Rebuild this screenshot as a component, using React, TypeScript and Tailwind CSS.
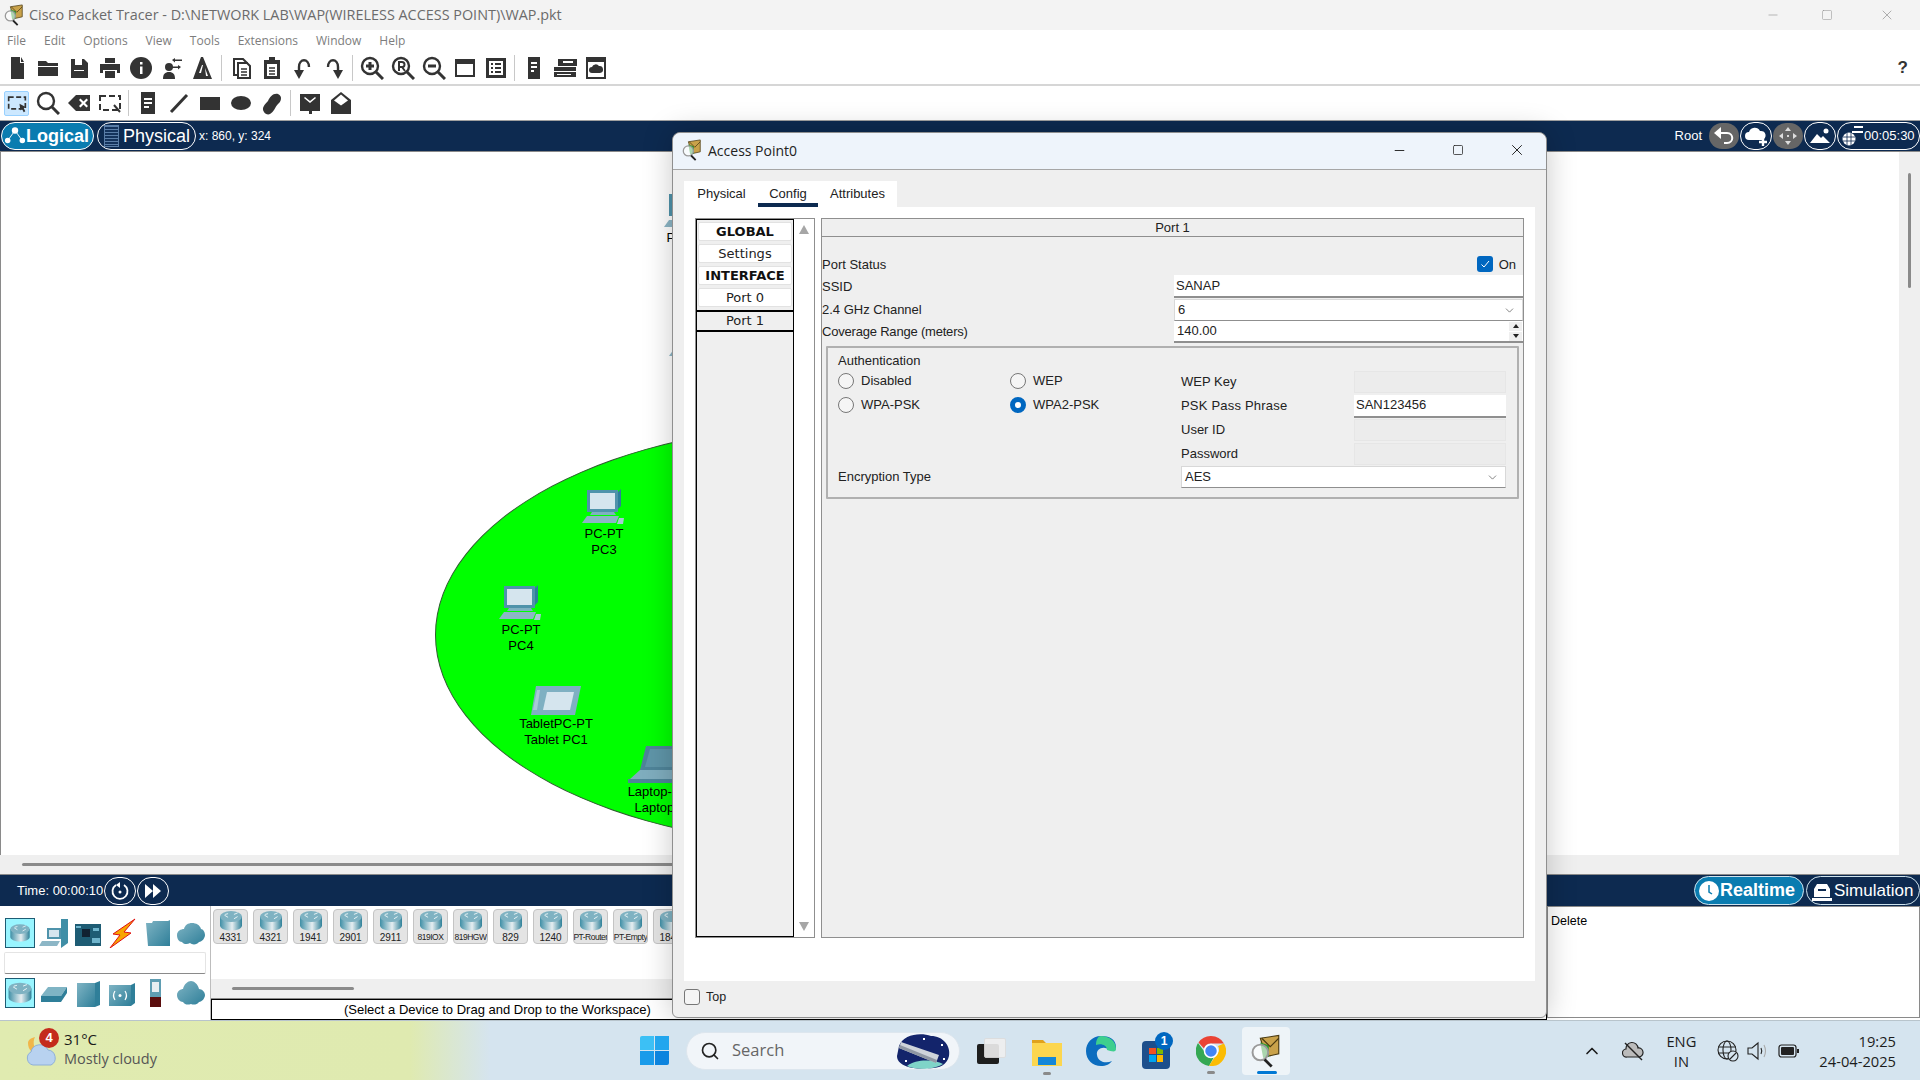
import React from 'react';
import { ChevronDown, ChevronUp, Minus, Search, Square, X } from 'lucide-react';

const D = '#333333';

// toolbar glyphs, all on a 24 box
const glyphs: Record<string, React.ReactNode> = {
  newFile: <path fill={D} d="M6 1h9v6h4v16H6zM16 1l3 5h-3z" />,
  open: <path fill={D} d="M2 5h8l2 2h10v3H2zM2 11h20v9H2z" />,
  save: <path fill={D} fillRule="evenodd" d="M4 3h13l4 4v15H4zM8 3v6h7V3zM7 14v1h10v-1z" />,
  print: <path fill={D} d="M7 2h10v5H7zM2 8h20v9h-3v-3H5v3H2zM7 15h10v7H7z" />,
  info: <><circle cx="12" cy="12" r="11" fill={D} /><path fill="#fff" d="M11 6h2.5v2.5H11zM11 10.5h2.5V18H11z" /></>,
  wizard: <><circle cx="9" cy="11" r="4" fill={D} /><path fill={D} d="M3 23c0-5 2-7 6-7s6 2 6 7zM12 4l3-2v1.5h7v1.5h-7v1.5zM21 11l-3-2v1.5h-6V12h6v1.5z" /></>,
  flask: <path fill={D} fillRule="evenodd" d="M10 1h2l9 22H2zM11 9l-3 8h2l2-8zM14 12l1 8h2z" />,
  copy: <><path fill="#fff" stroke={D} strokeWidth="2" d="M5 3h9l4 4v12H5z" /><path fill="#fff" stroke={D} strokeWidth="2" d="M9 7h9l3 3v12H9z" /><path stroke={D} strokeWidth="1.5" d="M12 13h6M12 16h6M12 19h6" /></>,
  paste: <><path fill={D} d="M4 4h16v19H4z" /><path fill={D} d="M9 1h6v5H9z" /><path fill="#fff" d="M7 8h10v12H7z" /><path stroke={D} strokeWidth="1.5" d="M9 12h6M9 15h6M9 18h6" /></>,
  undo: <><path fill="none" stroke={D} strokeWidth="2.4" d="M18 11C18 2 8 2 8 11v5" /><path fill={D} d="M3 14h10l-5 9z" /></>,
  redo: <><path fill="none" stroke={D} strokeWidth="2.4" d="M6 11C6 2 16 2 16 11v5" /><path fill={D} d="M11 14h10l-5 9z" /></>,
  zoomIn: <><circle cx="10" cy="10" r="8" fill="#fff" stroke={D} strokeWidth="2.4" /><path stroke={D} strokeWidth="3" d="M16 16l7 7M6 10h8M10 6v8" /></>,
  zoomReset: <><circle cx="10" cy="10" r="8" fill="#fff" stroke={D} strokeWidth="2.4" /><path stroke={D} strokeWidth="3" d="M16 16l7 7" /><path fill="none" stroke={D} strokeWidth="2" d="M8 15V6h3a2.5 2.5 0 010 5H8M11 11l3 4" /></>,
  zoomOut: <><circle cx="10" cy="10" r="8" fill="#fff" stroke={D} strokeWidth="2.4" /><path stroke={D} strokeWidth="3" d="M16 16l7 7M6 10h8" /></>,
  win: <path fill={D} fillRule="evenodd" d="M2 3h20v18H2zM4 8v11h16V8z" />,
  list: <path fill={D} fillRule="evenodd" d="M2 2h20v20H2zM5 5v14h14V5zM7 7h2v2H7zM11 7h6v2h-6zM7 11h2v2H7zM11 11h6v2h-6zM7 15h2v2H7zM11 15h6v2h-6z" />,
  server: <path fill={D} fillRule="evenodd" d="M6 1h12v22H6zM9 6v2h6V6zM9 10v2h6v-2zM9 14v2h3v-2z" />,
  rack: <path fill={D} fillRule="evenodd" d="M5 3h19v7H5zM10 5v2h10V5zM1 11h22v4H1zM1 16h22v5H1zM4 18v1h14v-1z" />,
  cloudBox: <><path fill={D} fillRule="evenodd" d="M2 1h20v22H2zM4 6v15h16V6z" /><path fill={D} d="M8 17a3 3 0 010-6 4 4 0 017-1 3.5 3.5 0 011 7z" /></>,
  select: <><path fill="none" stroke={D} strokeWidth="2" strokeDasharray="6 3" d="M2 5h20v14H2z" /><path fill={D} d="M15 13l8 4-3 1 2 4-2 1-2-4-2 2z" /></>,
  inspect: <><circle cx="10" cy="10" r="8" fill="none" stroke={D} strokeWidth="2.4" /><path stroke={D} strokeWidth="3" d="M16 16l7 7" /></>,
  erase: <path fill={D} fillRule="evenodd" d="M9 4h14v16H9L1 12zM12 9l3 3-3 3 1.5 1.5 3-3 3 3L21 15l-3-3 3-3-1.5-1.5-3 3-3-3z" />,
  resize: <><path fill="none" stroke={D} strokeWidth="2" strokeDasharray="6 3" d="M2 5h20v14H2z" /><path stroke={D} strokeWidth="2" d="M16 14l6 7" /></>,
  note: <path fill={D} fillRule="evenodd" d="M5 1h14v22H5zM8 7v2h8V7zM8 11v2h8v-2zM8 15v2h5v-2z" />,
  line: <path stroke={D} strokeWidth="3" d="M4 21L20 4" />,
  rect: <path fill={D} d="M2 6h20v13H2z" />,
  oval: <ellipse cx="12" cy="12" rx="10" ry="7" fill={D} />,
  free: <path fill={D} d="M4 21c-3-4 1-8 4-11 2-4 5-8 10-7 5 2 3 8 0 10-3 3-4 8-8 10-2 1-5 0-6-2z" />,
  mail: <path fill={D} fillRule="evenodd" d="M2 3h20v17h-8v3h-3v-3H2zM6 7l6 5 6-5-1-1-5 4-5-4z" />,
  mailOpen: <><path fill={D} d="M12 1l10 8v14H2V9z" /><path fill="#fff" d="M12 3.5L5 9.5l7 5 7-5z" /></>,
};

const Tool = ({ name, active }: { name: string; active?: boolean }) => (
  <div className="w-[31px] h-full flex items-center justify-center">
    <div className={active ? 'w-[25px] h-[25px] flex items-center justify-center rounded-[2px] bg-[#cce8ff] border border-[#99d1ff]' : 'flex items-center justify-center'}>
      <svg width="24" height="24" viewBox="0 0 24 24" className={active ? 'w-[20px] h-[20px]' : ''}>{glyphs[name]}</svg>
    </div>
  </div>
);

const Sep = () => <div className="w-px h-[26px] bg-[#c8c8c8] mx-[3px]" />;

const PtLogo = ({ size }: { size: number }) => (
  <svg width={size} height={size} viewBox="0 0 24 24">
    <path fill="#c9a24a" stroke="#4a3a10" strokeWidth="0.8" d="M8 3l13-2v13l-9 2z" />
    <path fill="#2f9a35" d="M8 6l6 2v8l-4 1z" />
    <path fill="none" stroke="#4a3a10" strokeWidth="0.8" d="M9 3l6 6 6-6" />
    <circle cx="8" cy="13" r="5.5" fill="#ffffff" fillOpacity="0.6" stroke="#9a9a9a" strokeWidth="1.4" />
    <path stroke="#222" strokeWidth="2" d="M11 18l5 5" />
  </svg>
);

const Router = ({ w = 34, h = 30 }: { w?: number; h?: number }) => (
  <svg width={w} height={h} viewBox="0 0 34 30">
    <defs>
      <linearGradient id="rt" x1="0" x2="1" y1="0" y2="0">
        <stop offset="0" stopColor="#3f8fa6" />
        <stop offset="0.55" stopColor="#e6eef1" />
        <stop offset="1" stopColor="#2f8199" />
      </linearGradient>
    </defs>
    <path fill="url(#rt)" d="M2 9v12c0 4 7 7 15 7s15-3 15-7V9z" />
    <ellipse cx="17" cy="9" rx="15" ry="7.5" fill="#7fb2c2" />
    <path stroke="#e8f2f5" strokeWidth="1.3" fill="none" d="M8 7l5 3M13 5l-4 1M21 6l5-2M21 12l5-3" />
  </svg>
);

const Pc = () => (
  <svg width="44" height="38" viewBox="0 0 44 38">
    <path fill="#2d7f9b" d="M7 1h32l-3 3v17l3-3V1z" />
    <path fill="#4f93ab" d="M5 2h31v22H5z" />
    <path fill="#d5e5ee" d="M8 5h25v16H8z" />
    <path fill="#7fb0c2" d="M10 24h22l2 3H8z" />
    <path fill="#8cb6c6" d="M5 28h32l-3 7H0z" />
    <path fill="#a9c9d5" d="M37 30h5l-1 6h-6z" />
  </svg>
);

const Tablet = () => (
  <svg width="50" height="30" viewBox="0 0 50 30">
    <path fill="#7fb0c2" d="M5 0h45l-6 29H0z" />
    <path fill="#d5e5ee" d="M16 6h27l-4 18H12z" />
    <path fill="#a9c9d5" d="M6 4l3 0-3 20H2z" />
  </svg>
);

const Laptop = () => (
  <svg width="60" height="38" viewBox="0 0 60 38">
    <path fill="#4f8499" d="M18 0h40l-8 24H12z" />
    <path fill="#5f95a8" d="M22 3h34l-7 18H17z" />
    <path fill="#7fadbe" d="M12 24h42l6 9H2z" />
    <path fill="#4f8499" d="M0 33h60v4H0z" />
  </svg>
);

const devices = ['4331', '4321', '1941', '2901', '2911', '819IOX', '819HGW', '829', '1240', 'PT-Router', 'PT-Empty', '1841'];

const Shape = ({ kind }: { kind: string }) => {
  const grad = (
    <defs>
      <linearGradient id="teal" x1="0" x2="1" y1="0" y2="1">
        <stop offset="0" stopColor="#7fb4c4" />
        <stop offset="1" stopColor="#2f7f99" />
      </linearGradient>
    </defs>
  );
  const body: Record<string, React.ReactNode> = {
    end: <><path fill="#3f8ea6" d="M22 1h7v24l-7 5z" /><path fill="#4f93ab" d="M8 10h14v11H8z" /><path fill="#d5e5ee" d="M10 12h10v7H10z" /><path fill="#8cb6c6" d="M3 23h18l-3 5H0z" /></>,
    board: <><path fill="#1e5c74" d="M2 6h26v22H2z" /><path fill="#123" d="M9 11h8v8H9z" /><path fill="#6fb4cc" d="M3 8h5v2H3zM20 10h6v3h-6zM19 20h8v5h-8z" /></>,
    bolt: <path fill="#f7a500" stroke="#e01010" strokeWidth="1" d="M28 1L6 16l7 1-10 13 21-15-7-1z" />,
    folder: <path fill="url(#teal)" d="M5 5h6l1-2 15 0 2-1v26H7z" />,
    wan: <path fill="url(#teal)" d="M2 17c0-4 4-6 7-6 1-4 4-6 8-6s8 2 9 6c2 0 4 3 4 6s-3 7-6 7c-2 3-7 3-9 1-3 2-7 1-8-1-3 0-5-3-5-7z" />,
    sw: <><path fill="#7fb4c4" d="M9 9h19l-6 9H2z" /><path fill="#2f7f99" d="M2 18h20v6H2zM22 18l6-9v6l-6 9z" /></>,
    hub: <><path fill="url(#teal)" d="M4 5h18v24H4z" /><path fill="#2f7f99" d="M22 5l5-2v24l-5 2z" /></>,
    wifi: <><path fill="url(#teal)" d="M2 7h22v21H2z" /><path fill="#2f7f99" d="M24 7l4-2v20l-4 3z" /><path fill="none" stroke="#fff" strokeWidth="1.2" d="M8 13c-2 3-2 6 0 9M18 13c2 3 2 6 0 9" /><circle cx="13" cy="17.5" r="1.5" fill="#fff" /></>,
    wlc: <><path fill="#5f9db2" d="M9 1h11v18H9z" /><path fill="#e8eef1" d="M11 4h7v10h-7z" /><path fill="#5a0d0d" d="M9 19h11v10H9z" /></>,
    cloud: <path fill="url(#teal)" d="M2 17c0-4 4-6 6-6 1-5 5-8 8-8s7 3 8 8c3 0 6 3 6 6s-3 7-6 7c-2 3-6 3-8 2-3 1-6 1-8-2-3 0-6-3-6-7z" />,
  };
  return <svg width="30" height="30" viewBox="0 0 30 30">{grad}{body[kind]}</svg>;
};

const Radio = ({ checked, label }: { checked?: boolean; label: string }) => (
  <div className="flex items-center">
    <div className={checked ? 'w-[16px] h-[16px] rounded-full border-[5px] border-[#0067c0] bg-white' : 'w-[16px] h-[16px] rounded-full border border-[#777] bg-[#f5f5f5]'} />
    <span className="ml-[7px]">{label}</span>
  </div>
);

const SideButton = ({ label, bold }: { label: string; bold?: boolean }) => (
  <div className={bold
    ? "h-[19px] mb-[3px] bg-white rounded-[2px] border border-[#e2e2e2] flex items-center justify-center font-['DejaVu_Sans'] font-bold text-[13px] text-[#111]"
    : "h-[19px] mb-[3px] bg-white rounded-[2px] border border-[#e2e2e2] flex items-center justify-center font-['DejaVu_Sans'] text-[13px] text-[#222]"}>
    {label}
  </div>
);

const Pill = ({ children, filled }: { children: React.ReactNode; filled?: boolean }) => (
  <div className={filled ? 'w-[30px] h-[26px] rounded-full bg-[#666666] flex items-center justify-center' : 'w-[32px] h-[28px] rounded-full border border-white flex items-center justify-center'}>
    {children}
  </div>
);

const Node = ({ pos, icon, lines }: { pos: string; icon: React.ReactNode; lines: string[] }) => (
  <div className={`absolute flex flex-col items-center w-[100px] text-[13px] leading-[16px] text-black ${pos}`}>
    {icon}
    {lines.map((l) => <span key={l}>{l}</span>)}
  </div>
);

export default function App() {
  return (
    <div className="relative w-[1920px] h-[1080px] overflow-hidden flex flex-col bg-white font-['Liberation_Sans',sans-serif] text-[13px] text-black">
      {/* title bar */}
      <div className="h-[30px] bg-[#f3f3f3] flex items-center pl-[3px] shrink-0">
        <PtLogo size={22} />
        <span className="ml-[4px] font-['Open_Sans',sans-serif] text-[14.4px] text-[#6b6b6b]">Cisco Packet Tracer - D:\NETWORK LAB\WAP(WIRELESS ACCESS POINT)\WAP.pkt</span>
        <div className="ml-auto flex items-center text-[#8a8a8a]">
          <Minus size={14} strokeWidth={1} className="mr-[41px]" />
          <Square size={12} strokeWidth={1} className="mr-[46px]" />
          <X size={16} strokeWidth={1} className="mr-[25px]" />
        </div>
      </div>
      {/* menu */}
      <div className="h-[21px] shrink-0 flex items-center pl-[7px] gap-[18px] font-['Open_Sans',sans-serif] text-[12px] text-[#7d7d7d]">
        <span>File</span><span>Edit</span><span>Options</span><span>View</span><span>Tools</span><span>Extensions</span><span>Window</span><span>Help</span>
      </div>
      {/* toolbars */}
      <div className="h-[35px] shrink-0 flex items-center pl-[1px] border-b-2 border-[#d6d6d6]">
        <Tool name="newFile" /><Tool name="open" /><Tool name="save" /><Tool name="print" /><Tool name="info" /><Tool name="wizard" /><Tool name="flask" />
        <Sep />
        <Tool name="copy" /><Tool name="paste" /><Tool name="undo" /><Tool name="redo" />
        <Sep />
        <Tool name="zoomIn" /><Tool name="zoomReset" /><Tool name="zoomOut" /><Tool name="win" /><Tool name="list" />
        <Sep />
        <Tool name="server" /><Tool name="rack" /><Tool name="cloudBox" />
        <span className="ml-auto mr-[12px] font-bold text-[17px] text-[#333]">?</span>
      </div>
      <div className="h-[34px] shrink-0 flex items-center pl-[1px]">
        <Tool name="select" active /><Tool name="inspect" /><Tool name="erase" /><Tool name="resize" />
        <Sep />
        <Tool name="note" /><Tool name="line" /><Tool name="rect" /><Tool name="oval" /><Tool name="free" />
        <Sep />
        <Tool name="mail" /><Tool name="mailOpen" />
      </div>
      {/* logical / physical bar */}
      <div className="h-[31px] shrink-0 bg-[#0d2a50] border-t border-[#a0a0a0] flex items-center pl-[1px] text-white">
        <div className="w-[93px] h-[28px] rounded-full bg-[#0a7cb0] border border-white flex items-center pl-[2px]">
          <svg width="22" height="24" viewBox="0 0 24 24">
            <path stroke="#fff" strokeWidth="1" d="M12 6L4 17M12 6l8 11" />
            <circle cx="12" cy="6" r="3.5" fill="#fff" /><circle cx="4" cy="17" r="3" fill="#fff" /><circle cx="20" cy="17" r="3" fill="#fff" />
          </svg>
          <span className="font-bold text-[18px]">Logical</span>
        </div>
        <div className="ml-[3px] w-[99px] h-[28px] rounded-full border border-white flex items-center pl-[6px]">
          <div className="w-[15px] h-[22px] bg-[repeating-linear-gradient(180deg,#5a7ea8_0,#5a7ea8_1px,#14335c_1px,#14335c_3px)] border border-[#5a7ea8]" />
          <span className="ml-[4px] text-[18px]">Physical</span>
        </div>
        <span className="ml-[3px] text-[12px]">x: 860, y: 324</span>
        <div className="ml-auto flex items-center gap-[1px]">
          <span className="mr-[6px] text-[13px]">Root</span>
          <Pill filled><svg width="22" height="20" viewBox="0 0 22 20"><path fill="none" stroke="#fff" strokeWidth="2" d="M4 7h10c7 0 7 10 0 10h-3" /><path fill="#fff" d="M8 1v12L1 7z" /></svg></Pill>
          <Pill><svg width="24" height="22" viewBox="0 0 24 22"><path fill="#fff" d="M5 15a4 4 0 010-8 6 6 0 0111-1 4.500 4.500 0 012 9z" /><path stroke="#fff" strokeWidth="2.400" d="M19 13v8M15 17h8" /></svg></Pill>
          <Pill filled><svg width="22" height="22" viewBox="0 0 22 22"><path fill="#ddd" d="M11 2l3 4H8zM11 20l-3-4h6zM2 11l4-3v6zM20 11l-4 3V8z" /><circle cx="11" cy="11" r="1" fill="#fff" /></svg></Pill>
          <Pill><svg width="22" height="20" viewBox="0 0 22 20"><path fill="#fff" d="M1 17L8 8l4 4 2-2 7 7z" /><circle cx="17" cy="5" r="2.500" fill="#fff" /></svg></Pill>
          <div className="w-[83px] h-[28px] rounded-full border border-white flex items-center pl-[3px]">
            <svg width="22" height="24" viewBox="0 0 22 24">
              <circle cx="8" cy="15" r="6.500" fill="#fff" />
              <path stroke="#0d2a50" strokeWidth="0.800" fill="none" d="M2 13h12M2 17h12M6 9v12M10 9v12" />
              <path stroke="#fff" strokeWidth="1.800" d="M13 3h9M11 8h11" />
            </svg>
            <span className="text-[13px] ml-[1px]">00:05:30</span>
          </div>
        </div>
      </div>
      {/* workspace */}
      <div className="relative flex-1 min-h-0 flex flex-col border-t border-[#8a8a8a]">
        <div className="flex-1 min-h-0 flex">
          <div className="relative flex-1 overflow-hidden border-l border-[#8a8a8a]">
            <div className="absolute left-[434px] top-[272px] w-[798px] h-[422px] rounded-[50%] bg-[#00ff00] border border-[#2f5f2f]" />
            <Node pos="left-[635px] top-[40px]" icon={<Pc />} lines={['PC-PT']} />
            <div className="absolute left-[668px] top-[169px]"><Pc /></div>
            <Node pos="left-[553px] top-[336px]" icon={<Pc />} lines={['PC-PT', 'PC3']} />
            <Node pos="left-[470px] top-[432px]" icon={<Pc />} lines={['PC-PT', 'PC4']} />
            <Node pos="left-[505px] top-[534px]" icon={<Tablet />} lines={['TabletPC-PT', 'Tablet PC1']} />
            <Node pos="left-[607px] top-[594px]" icon={<Laptop />} lines={['Laptop-PT', 'Laptop1']} />
          </div>
          <div className="w-[21px] bg-[#efefef] flex justify-center pt-[21px] shrink-0">
            <div className="w-[3px] h-[115px] bg-[#8a8a8a] rounded-full" />
          </div>
        </div>
        <div className="h-[20px] shrink-0 bg-[#efefef] border-b border-[#8a8a8a] flex items-center pl-[22px]">
          <div className="w-[800px] h-[3px] rounded-full bg-[#8a8a8a]" />
        </div>
      </div>
      {/* time bar */}
      <div className="h-[31px] shrink-0 bg-[#0d2a50] flex items-center pl-[17px] text-white">
        <span className="text-[13px] w-[87px]">Time: 00:00:10</span>
        <div className="w-[32px] h-[28px] rounded-full border border-white flex items-center justify-center">
          <svg width="20" height="20" viewBox="0 0 20 20"><path fill="none" stroke="#fff" strokeWidth="1.800" d="M6 4a7.500 7.500 0 108 0" /><path fill="#fff" d="M10 1v6L6 4z" /><circle cx="10" cy="11" r="1.500" fill="#fff" /></svg>
        </div>
        <div className="ml-px w-[32px] h-[28px] rounded-full border border-white flex items-center justify-center">
          <svg width="20" height="16" viewBox="0 0 20 16"><path fill="#fff" d="M2 1l8 7-8 7zM10 1l8 7-8 7z" /></svg>
        </div>
        <div className="ml-auto flex items-center">
          <div className="w-[110px] h-[29px] rounded-full bg-[#0a7cb0] border border-[#cfe4ee] flex items-center pl-[3px]">
            <svg width="22" height="22" viewBox="0 0 22 22"><circle cx="11" cy="11" r="10" fill="#fff" /><path fill="none" stroke="#0a7cb0" strokeWidth="1.500" d="M11 5v7l3 2" /></svg>
            <span className="font-bold text-[18px]">Realtime</span>
          </div>
          <div className="ml-[2px] w-[114px] h-[29px] rounded-full border border-[#cfe4ee] flex items-center pl-[3px]">
            <svg width="24" height="22" viewBox="0 0 24 22"><path fill="#fff" d="M7 4h10l3 5v8H4V9zM2 18h20v3H2z" /><path fill="#0d2a50" d="M8 9h8v2H8z" /></svg>
            <span className="text-[17px]">Simulation</span>
          </div>
        </div>
      </div>
      {/* device picker */}
      <div className="h-[114px] shrink-0 flex">
        <div className="w-[210px] shrink-0 flex flex-col pl-[5px] pr-[4px]">
          <div className="h-[30px] mt-[12px] flex items-center gap-[4px]">
            <div className="w-[30px] h-[30px] bg-[#99f5ff] border border-[#1e5c74] flex items-center justify-center"><Router w={22} h={20} /></div>
            <Shape kind="end" /><Shape kind="board" /><Shape kind="bolt" /><Shape kind="folder" /><Shape kind="wan" />
          </div>
          <div className="h-[22px] mt-[4px] -ml-[1px] bg-white border border-[#e4e4e4] border-b-[#8a8a8a] rounded-[2px]" />
          <div className="h-[30px] mt-[4px] flex items-center gap-[4px]">
            <div className="w-[30px] h-[30px] bg-[#99f5ff] border border-[#1e5c74] flex items-center justify-center"><Router w={26} h={24} /></div>
            <Shape kind="sw" /><Shape kind="hub" /><Shape kind="wifi" /><Shape kind="wlc" /><Shape kind="cloud" />
          </div>
        </div>
        <div className="flex-1 min-w-0 flex flex-col border-l border-[#bdbdbd]">
          <div className="h-[73px] flex gap-[5px] pl-[2px] pt-[3px]">
            {devices.map((d) => (
              <div key={d} className="w-[35px] h-[35px] rounded-[4px] bg-[#e4e4e4] border border-[#c4c4c4] flex flex-col items-center overflow-hidden">
                <Router w={30} h={22} />
                <span className={d.length > 5
                  ? 'text-[8.5px] leading-[11px] tracking-[-0.5px] whitespace-nowrap text-[#222]'
                  : 'text-[10px] leading-[11px] whitespace-nowrap text-[#222]'}>{d}</span>
              </div>
            ))}
          </div>
          <div className="h-[20px] bg-[#efefef] flex items-center pl-[21px] border-b border-[#8a8a8a]">
            <div className="w-[122px] h-[3px] rounded-full bg-[#8a8a8a]" />
          </div>
          <div className="flex-1 border border-black pl-[132px] flex items-center text-[13px] whitespace-nowrap">(Select a Device to Drag and Drop to the Workspace)</div>
        </div>
        <div className="w-[373px] shrink-0 border border-[#8a8a8a] mb-[2px] bg-white pl-[3px] pt-[5px] text-[12.5px]">Delete</div>
      </div>
      {/* taskbar */}
      <div className="relative z-20 h-[60px] shrink-0 flex items-center border-t border-[#b8c4cc] bg-[linear-gradient(90deg,#e0ebb0_0,#dfeab0_410px,#d5e4ef_490px,#d5e4ef_100%)]">
        <div className="relative w-[640px] h-full shrink-0 flex items-center pl-[64px]">
          <svg width="34" height="36" viewBox="0 0 34 36" className="absolute left-[24px] top-[10px]">
            <path fill="#f1b64a" d="M4 12c0 8 6 12 14 10C10 20 8 12 11 6 7 7 4 9 4 12z" />
            <path fill="#b8d2f0" stroke="#8fb0d8" d="M9 34a7 7 0 01-2-13 9 9 0 0117-2 8 8 0 013 15z" />
          </svg>
          <div className="absolute left-[39px] top-[7px] w-[20px] h-[20px] rounded-full bg-[#c42b1c] text-white flex items-center justify-center text-[13px] font-bold">4</div>
          <div className="flex flex-col font-['Open_Sans',sans-serif] leading-[20px] -mt-[3px]">
            <span className="text-[15px] text-[#1a1a1a]">31°C</span>
            <span className="text-[14.5px] text-[#555]">Mostly cloudy</span>
          </div>
        </div>
        <div className="grid grid-cols-2 gap-[1px] w-[29px] h-[29px] shrink-0">
          <div className="bg-[#3cc0f5] rounded-tl-[2px]" /><div className="bg-[#22a6ee]" /><div className="bg-[#1a9bea]" /><div className="bg-[#0d84de] rounded-br-[2px]" />
        </div>
        <div className="ml-[17px] w-[274px] h-[38px] rounded-full bg-[#f1f5f9] border border-[#dde6ee] flex items-center pl-[13px] shrink-0">
          <Search size={20} strokeWidth={2} className="text-[#222]" />
          <span className="ml-[12px] font-['Open_Sans',sans-serif] text-[16.5px] text-[#666]">Search</span>
          <svg width="60" height="38" viewBox="0 0 60 38" className="ml-auto mr-[6px]">
            <path fill="#13246b" d="M6 14C10 2 28 0 38 4c12 0 20 10 18 20-2 10-12 13-22 12C20 38 4 34 4 24z" />
            <path fill="#7fd4c8" d="M14 34c10-8 28-6 36-2-10 6-28 6-36 2z" />
            <path fill="#cfd4da" d="M8 10l38 13-3 8L6 16z" />
            <path fill="#8f97a3" d="M6 16l37 15 1-3L7 13z" />
            <path fill="#ffffff" d="M30 6h2v2h-2zM48 12h2v2h-2zM12 28h2v2h-2zM50 26h2v2h-2z" />
          </svg>
        </div>
        <div className="ml-[17px] relative w-[24px] h-[26px] shrink-0">
          <div className="absolute left-0 bottom-0 w-[22px] h-[20px] bg-[#1e1e1e] rounded-[2px]" />
          <div className="absolute left-[7px] top-0 w-[22px] h-[20px] bg-[#f0f0f0] border border-[#ddd] rounded-[2px] opacity-90" />
        </div>
        <div className="ml-[31px] w-[30px] h-[26px] shrink-0 relative">
          <svg width="30" height="28" viewBox="0 0 30 28"><path fill="#e0a21c" d="M0 2h11l3 3h16v5H0z" /><path fill="#fcd64f" d="M0 5h30v23H0z" /><path fill="#1587d8" d="M6 19h18v8H6z" /></svg>
          <div className="absolute left-[11px] top-[34px] w-[8px] h-[3px] rounded-full bg-[#8a8a8a]" />
        </div>
        <svg width="30" height="32" viewBox="0 0 30 32" className="ml-[24px] shrink-0">
          <path fill="#0c6dbf" d="M15 1C6 1 0 8 0 16c0 9 7 15 15 15 5 0 9-2 11-5-6 3-14 1-15-6-1-5 4-8 8-7 6 1 11 3 11-1 0-8-7-11-15-11z" />
          <path fill="#3ecf8e" d="M15 1c8 0 15 5 15 13 0 4-5 2-9 1 0-5-6-7-11-5 0-5 2-9 5-9z" />
        </svg>
        <div className="ml-[26px] relative w-[28px] h-[36px] shrink-0">
          <div className="absolute left-0 bottom-0 w-[28px] h-[28px] rounded-[4px] bg-[#1d4f8c] grid grid-cols-2 gap-px p-[7px]">
            <div className="bg-[#f25022]" /><div className="bg-[#7fba00]" /><div className="bg-[#00a4ef]" /><div className="bg-[#ffb900]" />
          </div>
          <div className="absolute left-[13px] -top-[1px] w-[18px] h-[18px] rounded-full bg-[#0067c0] text-white flex items-center justify-center text-[12px] font-bold">1</div>
        </div>
        <div className="ml-[26px] relative w-[30px] h-[30px] shrink-0">
          <svg width="30" height="30" viewBox="0 0 30 30">
            <path fill="#ea4335" d="M15 0a15 15 0 0113 7.500H15a7.500 7.500 0 00-7 5L2.500 6.500A15 15 0 0115 0z" />
            <path fill="#34a853" d="M2 7a15 15 0 0011 22.900l5-8.900a7.500 7.500 0 01-10-6z" />
            <path fill="#fbbc04" d="M28 7.500a15 15 0 01-15 22.400l6-9.500A7.500 7.500 0 0022 10z" />
            <circle cx="15" cy="15" r="6.500" fill="#4285f4" stroke="#fff" strokeWidth="1.500" />
          </svg>
          <div className="absolute left-[11px] top-[35px] w-[8px] h-[3px] rounded-full bg-[#8a8a8a]" />
        </div>
        <div className="ml-[16px] relative w-[48px] h-[48px] rounded-[4px] bg-[#eef4f8] flex items-center justify-center shrink-0">
          <PtLogo size={34} />
          <div className="absolute left-[15px] bottom-[1px] w-[20px] h-[3px] rounded-full bg-[#0078d4]" />
        </div>
        <div className="ml-auto flex items-center text-[#1c1c1c] font-['Open_Sans',sans-serif] text-[14.7px] leading-[20px] pr-[24px]">
          <ChevronUp size={20} strokeWidth={2} className="mr-[20px]" />
          <svg width="22" height="20" viewBox="0 0 22 20" className="mr-[22px]">
            <path fill="#bbb" stroke="#222" strokeWidth="1.200" d="M5 16a4 4 0 01-1-8 6 6 0 0112-1 4.500 4.500 0 011 9z" />
            <path stroke="#222" strokeWidth="1.400" d="M3 2l17 17" />
          </svg>
          <div className="flex flex-col items-center mr-[21px]"><span>ENG</span><span>IN</span></div>
          <svg width="22" height="22" viewBox="0 0 22 22" className="mr-[8px]" fill="none" stroke="#222" strokeWidth="1.100">
            <circle cx="10" cy="10" r="9" /><ellipse cx="10" cy="10" rx="4" ry="9" /><path d="M1 7h18M1 13h18" />
            <circle cx="16" cy="16" r="5" fill="#d5e4ef" /><path d="M13 19l6-6" />
          </svg>
          <svg width="22" height="20" viewBox="0 0 22 20" className="mr-[9px]" fill="none" stroke="#222" strokeWidth="1.100">
            <path d="M1 7h4l6-5v16l-6-5H1z" /><path d="M14 7c1 2 1 4 0 6" /><path stroke="#aaa" d="M17 4c2 4 2 8 0 12" />
          </svg>
          <svg width="22" height="14" viewBox="0 0 22 14" className="mr-[19px]">
            <rect x="1" y="1" width="17" height="12" rx="2.500" fill="none" stroke="#222" strokeWidth="1.200" /><rect x="3" y="3" width="13" height="8" rx="1" fill="#222" /><rect x="19" y="5" width="2" height="4" fill="#222" />
          </svg>
          <div className="flex flex-col items-end"><span>19:25</span><span>24-04-2025</span></div>
        </div>
      </div>
      {/* access point dialog */}
      <div className="absolute z-10 left-[672px] top-[132px] w-[875px] h-[886px] flex flex-col rounded-t-[8px] rounded-b-[6px] bg-[#efefef] border border-[#8f8f8f] shadow-[0_0_30px_rgba(0,0,0,0.22)]">
        <div className="h-[37px] shrink-0 rounded-t-[8px] bg-[#eef4fb] border-b border-[#a6a6a6] flex items-center pl-[8px] pb-[2px]">
          <PtLogo size={22} />
          <span className="ml-[5px] font-['Open_Sans',sans-serif] text-[14px] text-[#222]">Access Point0</span>
          <div className="ml-auto flex items-center text-[#222]">
            <Minus size={15} strokeWidth={1.500} className="mr-[45px]" />
            <Square size={12} strokeWidth={1.500} className="mr-[44px]" />
            <X size={18} strokeWidth={1.300} className="mr-[20px]" />
          </div>
        </div>
        <div className="flex-1 min-h-0 flex flex-col pl-[11px] pr-[11px] pt-[11px]">
          <div className="w-[213px] h-[26px] bg-white flex shrink-0 text-[13px] text-[#222]">
            <div className="w-[74px] flex items-center justify-center pl-[1px]">Physical</div>
            <div className="w-[60px] flex items-center justify-center border-b-4 border-[#0d2a50] pt-[3px]">Config</div>
            <div className="flex-1 flex items-center justify-center">Attributes</div>
          </div>
          <div className="flex-1 min-h-0 bg-white flex pl-[11px] pr-[11px] pt-[11px] pb-[43px]">
            <div className="w-[120px] shrink-0 flex border border-[#8f8f8f]">
              <div className="w-[98px] h-full bg-[#efefef] border border-black px-[1px] pt-[2px]">
                <SideButton label="GLOBAL" bold />
                <SideButton label="Settings" />
                <SideButton label="INTERFACE" bold />
                <SideButton label="Port 0" />
                <div className="-mx-[1px] h-[22px] border-y-2 border-black flex items-center justify-center font-['DejaVu_Sans'] text-[13px] text-[#222]">Port 1</div>
              </div>
              <div className="flex-1 flex flex-col items-center justify-between py-[6px] text-[#a6a6a6]">
                <div className="w-0 h-0 border-x-[5px] border-x-transparent border-b-[9px] border-b-[#a6a6a6]" />
                <div className="w-0 h-0 border-x-[5px] border-x-transparent border-t-[9px] border-t-[#a6a6a6]" />
              </div>
            </div>
            <div className="ml-[6px] flex-1 min-w-0 bg-[#efefef] border border-[#8f8f8f] flex flex-col text-[#222]">
              <div className="h-[18px] shrink-0 border-b border-[#8f8f8f] flex items-center justify-center">Port 1</div>
              <div className="h-[38px] flex items-end pb-[1px]">
                <span className="flex-1">Port Status</span>
                <div className="flex items-center mr-[7px]">
                  <div className="w-[16px] h-[16px] rounded-[3px] bg-[#0067c0] flex items-center justify-center">
                    <svg width="10" height="10" viewBox="0 0 10 10"><path fill="none" stroke="#fff" strokeWidth="1" d="M1.500 5.500l2.500 2.500 5-6" /></svg>
                  </div>
                  <span className="ml-[6px]">On</span>
                </div>
              </div>
              <div className="h-[23px] flex items-center">
                <span className="w-[352px]">SSID</span>
                <div className="flex-1 h-full bg-white border-b-2 border-[#8f8f8f] flex items-center pl-[2px]">SANAP</div>
              </div>
              <div className="h-[22px] mt-[1px] flex items-center">
                <span className="w-[352px]">2.4 GHz Channel</span>
                <div className="flex-1 h-full bg-white border border-[#d8d8d8] border-b-[#8f8f8f] flex items-center pl-[3px] pr-[6px] justify-between">6<ChevronDown size={13} strokeWidth={1.200} className="text-[#444]" /></div>
              </div>
              <div className="h-[22px] flex items-center">
                <span className="w-[352px] tracking-[-0.2px]">Coverage Range (meters)</span>
                <div className="flex-1 h-full bg-white border-b-2 border-[#8f8f8f] flex items-center pl-[3px] justify-between">140.00
                  <div className="w-[13px] mr-[1px] flex flex-col gap-px">
                    <div className="h-[9px] bg-[#efefef] flex items-center justify-center"><div className="w-0 h-0 border-x-[3px] border-x-transparent border-b-[4px] border-b-[#222]" /></div>
                    <div className="h-[9px] bg-[#efefef] flex items-center justify-center"><div className="w-0 h-0 border-x-[3px] border-x-transparent border-t-[4px] border-t-[#222]" /></div>
                  </div>
                </div>
              </div>
              <div className="mx-[4px] mt-[3px] h-[153px] shrink-0 border-2 border-[#b0b0b0] rounded-[1px] pl-[10px] pr-[11px] flex">
                <div className="w-[343px] shrink-0 flex flex-col">
                  <div className="mt-[5px] h-[16px] flex items-center">Authentication</div>
                  <div className="h-[24px] grid grid-cols-[172px_1fr] items-center">
                    <Radio label="Disabled" /><Radio label="WEP" />
                  </div>
                  <div className="h-[24px] grid grid-cols-[172px_1fr] items-center">
                    <Radio label="WPA-PSK" /><Radio checked label="WPA2-PSK" />
                  </div>
                  <div className="mt-auto mb-[11px]">Encryption Type</div>
                </div>
                <div className="flex-1 min-w-0 flex flex-col pt-[22px]">
                  <div className="h-[24px] flex items-center">
                    <span className="w-[173px]">WEP Key</span>
                    <div className="flex-1 h-[22px] bg-[#ececec] border border-[#e6e6e6]" />
                  </div>
                  <div className="h-[24px] flex items-center">
                    <span className="w-[173px] tracking-[0.2px]">PSK Pass Phrase</span>
                    <div className="flex-1 h-[23px] bg-white border-b-2 border-[#8f8f8f] flex items-center pl-[2px]">SAN123456</div>
                  </div>
                  <div className="h-[24px] flex items-center">
                    <span className="w-[173px]">User ID</span>
                    <div className="flex-1 h-[22px] bg-[#ececec] border border-[#e6e6e6]" />
                  </div>
                  <div className="h-[24px] flex items-center">
                    <span className="w-[173px]">Password</span>
                    <div className="flex-1 h-[22px] bg-[#ececec] border border-[#e6e6e6]" />
                  </div>
                  <div className="h-[22px] bg-white border border-[#d8d8d8] border-b-[#8f8f8f] flex items-center pl-[3px] pr-[6px] justify-between">AES<ChevronDown size={13} strokeWidth={1.200} className="text-[#444]" /></div>
                </div>
              </div>
            </div>
          </div>
        </div>
        <div className="h-[36px] shrink-0 flex items-center pl-[11px] pb-[4px] text-[12.5px] text-[#222]">
          <div className="w-[16px] h-[16px] rounded-[3px] border border-[#777] bg-[#f5f5f5]" />
          <span className="ml-[6px]">Top</span>
        </div>
      </div>
    </div>
  );
}
